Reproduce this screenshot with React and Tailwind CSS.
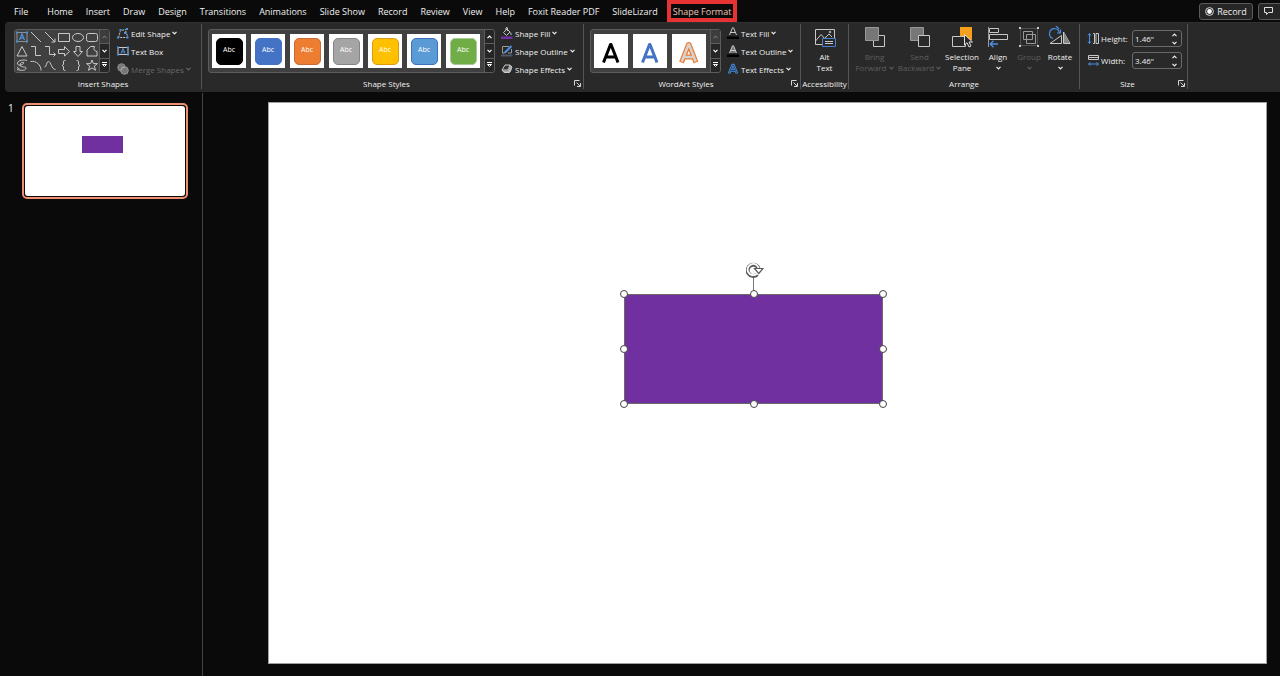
import React from 'react';

const TABS = [
  'Home', 'Insert', 'Draw', 'Design', 'Transitions', 'Animations', 'Slide Show',
  'Record', 'Review', 'View', 'Help', 'Foxit Reader PDF', 'SlideLizard',
];

function Chevron({ className = '' }) {
  return (
    <svg viewBox="0 0 5 4" className={`h-1 w-[5px] shrink-0 ${className}`} fill="none" stroke="currentColor" strokeWidth="1.2">
      <path d="M.5 .8 2.5 2.8 4.5 .8" />
    </svg>
  );
}

function Icon({ children, w = 12, className = 'size-3', h = w }) {
  return (
    <svg viewBox={`0 0 ${w} ${h}`} className={`shrink-0 ${className}`} fill="none" stroke="#c8c8c8" strokeWidth="1">
      {children}
    </svg>
  );
}

function Group({ label, launcher, className, children }) {
  return (
    <section aria-label={label} className={`flex shrink-0 flex-col border-r border-[#555] ${className}`}>
      <div className="flex h-[54px] shrink-0 items-center">{children}</div>
      <div className="flex h-[11px] shrink-0 items-center">
        <h2 className="flex-1 text-center whitespace-nowrap">{label}</h2>
        {launcher && (
          <button aria-label={`${label} options`} className="flex w-3 justify-center">
            <svg viewBox="0 0 7 7" className="size-[7px]" fill="none" stroke="#d8d8d8">
              <path d="M.5 5.5V.5H5.5M2.5 2.5 6 6M6.5 3V6.5H3" />
            </svg>
          </button>
        )}
      </div>
    </section>
  );
}

function GalleryScroll({ upDisabled }) {
  const item = 'flex flex-1 items-center justify-center border-[#5c5c5c]';
  return (
    <div className="flex w-[10px] flex-col self-stretch border-l border-[#5c5c5c] bg-[#262626]">
      <button aria-label="Scroll up" disabled={upDisabled} className={`${item} border-b ${upDisabled ? 'bg-[#3c3c3c] text-[#6a6a6a]' : 'text-white'}`}>
        <Chevron className="rotate-180" />
      </button>
      <button aria-label="Scroll down" className={`${item} border-b text-white`}><Chevron /></button>
      <button aria-label="More" className={`${item} text-white`}>
        <svg viewBox="0 0 5 6" className="h-1.5 w-[5px]" fill="none" stroke="currentColor"><path d="M0 .5H5M.5 2.5 2.5 4.5 4.5 2.5Z" /></svg>
      </button>
    </div>
  );
}

const SHAPES = [
  ['Text box', <g key="a"><path d="M2 2.5H12V11.5H2Z" stroke="#8f8f8f" /><path d="M4.5 10 7 4 9.5 10M5.4 8.2H8.6" stroke="#4a90e2" strokeWidth="1.3" /><path d="M1 1.5h2v2H1zM11 1.5h2v2h-2zM1 10.5h2v2H1zM11 10.5h2v2h-2z" fill="#4a90e2" stroke="none" /></g>],
  ['Line', <path key="a" d="M2 2 12 12" />],
  ['Arrow', <path key="a" d="M2 2 12 12M12 8.5V12H8.5" />],
  ['Rectangle', <path key="a" d="M1.5 3.5H12.5V11.5H1.5Z" />],
  ['Oval', <ellipse key="a" cx="7" cy="7.5" rx="5.5" ry="4" />],
  ['Rounded rectangle', <rect key="a" x="1.5" y="3.5" width="11" height="8" rx="2" />],
  ['Triangle', <path key="a" d="M7 2.5 12 12H2Z" />],
  ['Elbow connector', <path key="a" d="M2 2.5H6.5V11.5H12" />],
  ['Elbow arrow', <path key="a" d="M2 2.5H6.5V10.5H12.5M10.5 8.5 12.5 10.5 10.5 12.5" />],
  ['Right arrow', <path key="a" d="M1.5 5.5H7.5V2.5L12.5 7.5 7.5 12V9.5H1.5Z" />],
  ['Down arrow', <path key="a" d="M5 2.5H9V7.5H11.5L7 12.5 2.5 7.5H5Z" />],
  ['Freeform', <path key="a" d="M2 12V6L5.5 2.5H9.5Q7.5 6.5 12 7.5V12Z" />],
  ['Scribble', <path key="a" d="M12 2.500C9 1.500 3 2 2.500 5S7 7.500 8.500 5.500 5 4 5 7 12 8 11 10.500 6 12.500 2 11.500M2 9.500 4.500 11" />],
  ['Arc', <path key="a" d="M1.500 3.500C7.500 2.500 12 7 12 12.500" />],
  ['Curve', <path key="a" d="M1.500 9C4 9 3 3.500 5.500 3.500S8.500 11.500 12.500 11.500" />],
  ['Left brace', <path key="a" d="M8.500 2.500H7.500Q6.500 2.500 6.500 4V6.500L5 7.500 6.500 8.500V11Q6.500 12.500 7.500 12.500H8.500" />],
  ['Right brace', <path key="a" d="M5.500 2.500H6.500Q7.500 2.500 7.500 4V6.500L9 7.500 7.500 8.500V11Q7.500 12.500 6.500 12.500H5.500" />],
  ['Star', <path key="a" d="M7 2 8.400 5.600H12.500L9.300 8.100 10.500 12.300 7 9.900 3.500 12.300 4.700 8.100 1.500 5.600H5.600Z" />],
];

const STYLES = [
  ['bg-black', 'border-black'],
  ['bg-[#4472c4]', 'border-[#4472c4]'],
  ['bg-[#ed7d31]', 'border-[#c96a3a]'],
  ['bg-[#a5a5a5]', 'border-[#858585]'],
  ['bg-[#ffc000]', 'border-[#dc9c10]'],
  ['bg-[#5b9bd5]', 'border-[#3f6fbd]'],
  ['bg-[#70ad47]', 'border-[#a8c898]'],
];

const WORDART = [
  ['Black', '#000000', '#000000', 3],
  ['Blue', '#4472c4', '#4472c4', 3],
  ['Orange outline', '#ed7d31', '#d4d4d4', 5],
];

function MenuRow({ icon, label, menu = true, disabled = false }) {
  return (
    <button disabled={disabled} className={`flex h-[18px] items-center gap-0.5 whitespace-nowrap ${disabled ? 'text-[#686868]' : ''}`}>
      {icon}
      <span>{label}</span>
      {menu && <Chevron />}
    </button>
  );
}

function BigButton({ icon, lines, chevron, disabled, className }) {
  return (
    <button disabled={disabled} className={`flex h-[54px] shrink-0 flex-col items-center pt-0.5 ${disabled ? 'text-[#5e5e5e]' : ''} ${className}`}>
      {icon}
      <span className="mt-[3px] flex h-[11px] items-center">{lines[0]}</span>
      <span className="flex h-[11px] items-center gap-0.5 whitespace-nowrap">{lines[1]}{chevron && <Chevron />}</span>
    </button>
  );
}

function Big({ children }) {
  return <Icon w={22} className="size-[22px]">{children}</Icon>;
}

function SizeField({ id, label, value, icon }) {
  return (
    <div className="flex items-center">
      {icon}
      <label htmlFor={id} className="ml-px w-[31px]">{label}</label>
      <div className="flex h-[17px] w-[50px] items-center rounded-[3px] border border-[#6a6a6a] pr-1">
        <input id={id} defaultValue={value} className="w-full min-w-0 flex-1 bg-transparent pl-0.5 outline-none" />
        <div className="flex flex-col gap-1">
          <button aria-label={`Increase ${id}`}><Chevron className="block rotate-180" /></button>
          <button aria-label={`Decrease ${id}`}><Chevron className="block" /></button>
        </div>
      </div>
    </div>
  );
}

function TextA({ fill = 'none', stroke = '#c8c8c8', bar = true }) {
  return (
    <Icon>
      <path d="M2.500 8 5.500 .8H6.500L9.500 8M3.700 5.500H8.300" stroke={stroke} fill={fill} />
      {bar && <path d="M0 9.500H12V12H0Z" fill="#000" stroke="none" />}
    </Icon>
  );
}

const HANDLES = [
  'left-0 top-0', 'left-1/2 top-0', 'left-full top-0', 'left-0 top-1/2', 'left-full top-1/2',
  'left-0 top-full', 'left-1/2 top-full', 'left-full top-full',
];

function Ribbon() {
  return (
    <div className="ml-[5px] flex h-[70px] overflow-hidden rounded-l-[4px] border-t border-[#303030] bg-[#292929] pt-px pb-[3px] text-[8px] font-medium">
      <Group label="Insert Shapes" className="w-[197px]">
        <div className="ml-[9px] flex h-11 overflow-hidden rounded-[3px] border border-[#5c5c5c] bg-[#404040]">
          <div className="grid grid-cols-6">
            {SHAPES.map(([name, d]) => (
              <button key={name} aria-label={name} className="size-[14px]"><Icon w={14} className="block size-[14px]">{d}</Icon></button>
            ))}
          </div>
          <GalleryScroll upDisabled />
        </div>
        <div className="ml-[7px] flex flex-col">
          <MenuRow label="Edit Shape" icon={
            <Icon><path d="M1.500 10.500 3.500 3.500 9.500 2.500C7.500 5 10.500 6 10.500 10.500Z" strokeDasharray="2 1" /><path d="M0 9.500h2v2H0zM2.500 2h2v2h-2zM9 1h2v2H9zM9.500 9.500h2v2h-2zM7 5h2v2H7z" fill="#4a90e2" stroke="none" /></Icon>
          } />
          <MenuRow label="Text Box" menu={false} icon={
            <Icon><path d="M1 2.500H11V9.500H1Z" /><path d="M4 8.500 6 3.500 8 8.500M4.700 7H7.300" stroke="#4a90e2" /><path d="M0 1.500h2v2H0zM10 1.500h2v2h-2zM0 8.500h2v2H0zM10 8.500h2v2h-2z" fill="#4a90e2" stroke="none" /></Icon>
          } />
          <MenuRow label="Merge Shapes" disabled icon={
            <Icon><circle cx="4.500" cy="4.500" r="3.800" fill="#777" stroke="#8a8a8a" /><circle cx="7.500" cy="7.500" r="3.800" fill="#777" stroke="#9a9a9a" /><path d="M4 7.500A4 4 0 0 1 8 4" stroke="#aaa" /></Icon>
          } />
        </div>
      </Group>

      <Group label="Shape Styles" launcher className="w-[382px]">
        <div className="ml-1.5 flex h-11 items-center overflow-hidden rounded-[3px] border border-[#5c5c5c] bg-[#404040] pl-[3px]">
          <div className="mr-1 flex gap-[5px]">
            {STYLES.map(([bg, border]) => (
              <button key={bg} className="flex size-[34px] items-center justify-center bg-white">
                <span className={`flex size-[27px] items-center justify-center rounded-[5px] border pb-1 text-[7px] text-white ${bg} ${border}`}>Abc</span>
              </button>
            ))}
          </div>
          <GalleryScroll />
        </div>
        <div className="ml-1.5 flex flex-col">
          <MenuRow label="Shape Fill" icon={
            <Icon><path d="M2.500 5.500 6 2 9 5 5.500 8.500ZM5 3V.8H6.500V4M9.500 5.500Q10.500 7 10 8" /><path d="M0 9.500H11.500V12H0Z" fill="#7030a0" stroke="none" /></Icon>
          } />
          <MenuRow label="Shape Outline" icon={
            <Icon><path d="M8 1.500H1.500V8H3M10.500 4V8H7" stroke="#999" /><path d="M4 7.500 10.500 1" stroke="#4a90e2" strokeWidth="2" /><path d="M3 8.500 4.500 7" /><path d="M0 9.500H11.500V11.500H0Z" fill="#4d5966" stroke="none" /></Icon>
          } />
          <MenuRow label="Shape Effects" icon={
            <Icon><path d="M4 2H9L7 7H1Z" fill="#333" /><path d="M9 2 11 4 9.500 8 7 7M1 7 3 9.500H8.500L9.500 8" fill="#aaa" /></Icon>
          } />
        </div>
      </Group>

      <Group label="WordArt Styles" launcher className="w-[217px]">
        <div className="ml-1.5 flex h-11 items-center overflow-hidden rounded-[3px] border border-[#5c5c5c] bg-[#404040] pl-[3px]">
          <div className="mr-1 flex gap-[5px]">
            {WORDART.map(([name, stroke, core, w]) => (
              <button key={name} aria-label={name} className="size-[34px] bg-white">
                <svg viewBox="0 0 34 34" className="block size-[34px]" fill="none" strokeLinejoin="round">
                  <path d="M9.500 28.500 16.500 10.500H17L24 28.500M12 23H21.500" stroke={stroke} strokeWidth={w} />
                  {core !== stroke && <path d="M9.800 27.500 16.500 10.500H17L23.700 27.500M12 23H21.500" stroke={core} strokeWidth="2.500" />}
                </svg>
              </button>
            ))}
          </div>
          <GalleryScroll upDisabled />
        </div>
        <div className="ml-1.5 flex flex-col">
          <MenuRow label="Text Fill" icon={<TextA />} />
          <MenuRow label="Text Outline" icon={<TextA fill="#777" />} />
          <MenuRow label="Text Effects" icon={
            <Icon><path d="M2 10.500 5.500 2H6.500L10 10.500M3.500 7.500H8.500" stroke="#4a90e2" strokeWidth="2.500" /><path d="M2 10.500 5.500 2H6.500L10 10.500M3.500 7.500H8.500" stroke="#27486f" /></Icon>
          } />
        </div>
      </Group>

      <Group label="Accessibility" className="w-12">
        <BigButton className="w-full" lines={['Alt', 'Text']} icon={
          <Big><path d="M8 18.500H1.500V3.500H20.500V12M1.500 15 7 8.500 12 14M11 12 15 8 18 11" /><circle cx="16" cy="6" r=".8" /><path d="M8.500 12.500H21.500V20.500H8.500Z" stroke="#4a80d0" fill="#292929" /><path d="M11 15.500H19M11 17.500H19" /></Big>
        } />
      </Group>

      <Group label="Arrange" className="w-[231px]">
        <div className="ml-[3px] flex">
          <BigButton disabled chevron className="w-[45px]" lines={['Bring', 'Forward']} icon={
            <Big><path d="M9.500 9.500H20.500V20.500H9.500Z" /><path d="M1.500 1.500H14.500V14.500H1.500Z" fill="#777" stroke="#999" /></Big>
          } />
          <BigButton disabled chevron className="w-[45px]" lines={['Send', 'Backward']} icon={
            <Big><path d="M1.500 1.500H14.500V14.500H1.500Z" fill="#777" stroke="#999" /><path d="M9.500 9.500H20.500V20.500H9.500Z" fill="#292929" /></Big>
          } />
          <BigButton className="w-10" lines={['Selection', 'Pane']} icon={
            <Big><path d="M9 1H21V14H9Z" fill="#f5a01d" stroke="none" /><path d="M1.500 10.500H14.500V20.500H1.500Z" fill="#292929" /><path d="M13.500 8.500V19L16 16.700 18 21 20 20 18 16H21.500Z" fill="#292929" stroke="#e0e0e0" /></Big>
          } />
          <BigButton className="w-8" lines={['Align', <Chevron key="c" />]} icon={
            <Big><path d="M1.500 1V21" stroke="#999" /><path d="M2.500 2.500H11.500V6.500H2.500ZM2.500 8.500H20.500V13.500H2.500Z" /><path d="M3 18H11M6.500 14.800 3.200 18 6.500 21.200" stroke="#4a90e2" strokeWidth="1.300" /></Big>
          } />
          <BigButton disabled className="w-[30px]" lines={['Group', <Chevron key="c" />]} icon={
            <Big><path d="M2.500 2.500H19.500V19.500H2.500Z" stroke="#777" strokeDasharray="1 1" /><path d="M5.500 5.500H14.500V13.500H5.500ZM8.500 8.500H17.500V17.500H8.500Z" stroke="#999" /><path d="M1 1h2v2H1zM19 1h2v2h-2zM1 19h2v2H1zM19 19h2v2h-2z" fill="#ccc" stroke="none" /></Big>
          } />
          <BigButton className="w-8" lines={['Rotate', <Chevron key="c" />]} icon={
            <Big><path d="M1 17.500 12.500 9.500V17.500ZM14.500 6V17.500H21Z" /><path d="M15 6V17H20Z" fill="#888" stroke="none" /><path d="M4 12.500A5 5 0 1 1 10.500 7.500M7 0 10 3M8 7H11.500V3.500" stroke="#4a90e2" strokeWidth="1.200" /></Big>
          } />
        </div>
      </Group>

      <Group label="Size" launcher className="w-[108px]">
        <div className="ml-[7px] flex flex-col gap-[5px] pb-[3px]">
          <SizeField id="height" label="Height:" value={'1.46"'} icon={
            <Icon w={13} className="size-[13px]"><path d="M6 1.500H7.500V11.500H6M9 1.500H11.500V11.500H9Z" /><path d="M2.500 1.500V11.500M1 3.500 2.500 1.500 4 3.500M1 9.500 2.500 11.500 4 9.500" stroke="#4a90e2" /></Icon>
          } />
          <SizeField id="width" label="Width:" value={'3.46"'} icon={
            <Icon w={13} className="size-[13px]"><path d="M1.500 1.500H11.500V5.500H1.500ZM1.500 3.500H11.500" /><path d="M1.500 10H11.500M3.500 8.500 1.500 10 3.500 11.500M9.500 8.500 11.500 10 9.500 11.500" stroke="#4a90e2" /></Icon>
          } />
        </div>
      </Group>
    </div>
  );
}

export default function App() {
  return (
    <div className="flex min-h-screen flex-col overflow-hidden bg-[#0a0a0a] font-['Open_Sans','Noto_Sans',sans-serif] text-[9px] leading-[11px] text-[#f0f0f0]">
      <header className="flex h-[22px] items-center">
        <nav aria-label="Ribbon tabs" className="flex items-center gap-[13px] pl-3.5 whitespace-nowrap">
          <button className="mr-1.5">File</button>
          {TABS.map((t) => <button key={t}>{t}</button>)}
          <button aria-current="page" className="-ml-1 h-[22px] border-4 border-[#e63232] px-0.5 text-[#efc2b4]">Shape Format</button>
        </nav>
        <div className="ml-auto flex gap-[5px]">
          <button className="flex h-[17px] w-[54px] items-center justify-center gap-[3px] rounded-[3px] border border-[#5a5a5a] bg-[#262626]">
            <svg viewBox="0 0 9 9" className="size-[9px]"><circle cx="4.500" cy="4.500" r="3.900" fill="none" stroke="#fff" strokeWidth=".8" /><circle cx="4.500" cy="4.500" r="2.400" fill="#fff" /></svg>
            Record
          </button>
          <button aria-label="Comments" className="-mr-0.5 flex h-[17px] w-6 items-center justify-center rounded-l-[3px] border border-[#5a5a5a] bg-[#262626] pr-1">
            <svg viewBox="0 0 9 8" className="h-2 w-[9px]" fill="none" stroke="#e0e0e0"><path d="M.5 .5H8.500V5.500H4.500L2.500 7.500V5.500H.5Z" /></svg>
          </button>
        </div>
      </header>

      <Ribbon />

      <main className="mt-px flex flex-1">
        <aside aria-label="Slides" className="flex w-[203px] shrink-0 items-start border-r border-[#454545] pt-2.5 pl-2">
          <span className="w-3.5 text-[10px]">1</span>
          <button aria-label="Slide 1" className="h-24 w-[166px] rounded-[5px] border-2 border-[#ee8e72] p-px">
            <span className="relative block size-full rounded-[3px] bg-white">
              <span className="absolute top-[33%] left-[35.500%] h-[19.600%] w-[26%] bg-[#7030a0]" />
            </span>
          </button>
        </aside>
        <div className="flex-1 pt-[9px] pr-[13px] pb-3 pl-[65px]">
          <div className="relative aspect-[999/562] w-full border border-[#a0a0a0] bg-white">
            <div className="absolute top-[34.100%] left-[35.600%] h-[19.600%] w-[26%] bg-[#7030a0] inset-ring inset-ring-[#6a6a6a]">
              <span className="absolute -top-5 left-1/2 h-5 w-px -translate-x-px bg-[#777]" />
              <svg viewBox="0 0 18 16" className="absolute -top-8 left-1/2 h-4 w-[18px] -translate-x-2" fill="none">
                <path d="M11.200 12.300A5.600 5.600 0 1 1 12.800 7.500" stroke="#5c5c5c" strokeWidth="4" />
                <path d="M10.800 11.800A5.600 5.600 0 1 1 12.800 7.500" stroke="#fff" strokeWidth="1.800" />
                <path d="M8.500 6.500H17L12.800 11.500Z" fill="#fff" stroke="#5c5c5c" strokeWidth="1.200" />
              </svg>
              {HANDLES.map((p) => (
                <span key={p} className={`absolute size-2 -translate-1/2 rounded-full border border-[#444] bg-white ${p}`} />
              ))}
            </div>
          </div>
        </div>
      </main>
    </div>
  );
}
